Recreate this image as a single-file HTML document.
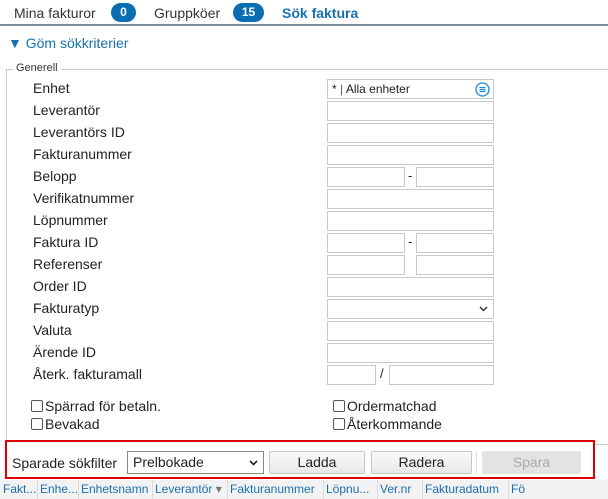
<!DOCTYPE html>
<html><head><meta charset="utf-8"><style>
*{box-sizing:border-box;margin:0;padding:0}
body{width:608px;height:499px;overflow:hidden;background:#fff;font-family:"Liberation Sans",sans-serif;color:#222;position:relative}
.a{position:absolute;white-space:nowrap}
.tab{font-size:14px;top:5px;color:#333}
.badge{background:#0a6db1;color:#fff;border-radius:10px;font-size:12px;font-weight:bold;height:19px;line-height:19px;text-align:center;top:3px}
.lbl{font-size:14px;left:33px;color:#222}
.in{position:absolute;border:1px solid #c8c8c8;height:20px;background:#fff}
.cb{position:absolute;width:12px;height:12px;border:1px solid #555;border-radius:2px;background:#fff}
.btn{position:absolute;top:451px;height:23px;border:1px solid #c8c8c8;border-radius:2px;background:linear-gradient(#fafafa,#e8e8e8);font-size:14px;text-align:center;line-height:21px;color:#222}
.hd{font-size:12px;color:#1a6fb0;top:482px}
.sep{position:absolute;top:480px;width:1px;height:19px;background:#dcdcdc}
</style></head><body>
<div class="a tab" style="left:14px">Mina fakturor</div>
<div class="a badge" style="left:111px;width:25px">0</div>
<div class="a tab" style="left:154px">Gruppköer</div>
<div class="a badge" style="left:233px;width:31px">15</div>
<div class="a tab" style="left:282px;color:#1a6fb0;font-weight:bold">Sök faktura</div>
<div class="a" style="left:0;top:24px;width:608px;height:2px;background:#7a8a99"></div>
<div class="a" style="left:8px;top:35px;font-size:14px;color:#1a6fb0">▼ Göm sökkriterier</div>
<div class="a" style="left:6px;top:69px;width:610px;height:376px;border:1px solid #c8c8c8"></div>
<div class="a" style="left:13px;top:62px;background:#fff;padding:0 3px;font-size:11px;color:#333">Generell</div>

<div class="a lbl" style="top:80px">Enhet</div>
<div class="in" style="left:327px;top:79px;width:167px;font-size:12px;line-height:18px;padding-left:4px">* <span style="color:#a04060">|</span> Alla enheter
<svg style="position:absolute;right:3px;top:2px" width="15" height="15" viewBox="0 0 15 15"><circle cx="7.5" cy="7.5" r="6.5" fill="none" stroke="#1a8ad8" stroke-width="1.3"/><path d="M4.5 5.5h6M4.5 7.5h6M4.5 9.5h6" stroke="#1a8ad8" stroke-width="1.3"/></svg></div>

<div class="a lbl" style="top:102px">Leverantör</div><div class="in" style="left:327px;top:101px;width:167px"></div>
<div class="a lbl" style="top:124px">Leverantörs ID</div><div class="in" style="left:327px;top:123px;width:167px"></div>
<div class="a lbl" style="top:146px">Fakturanummer</div><div class="in" style="left:327px;top:145px;width:167px"></div>
<div class="a lbl" style="top:168px">Belopp</div><div class="in" style="left:327px;top:167px;width:78px"></div><div class="a" style="left:408px;top:168px;font-size:13px">-</div><div class="in" style="left:416px;top:167px;width:78px"></div>
<div class="a lbl" style="top:190px">Verifikatnummer</div><div class="in" style="left:327px;top:189px;width:167px"></div>
<div class="a lbl" style="top:212px">Löpnummer</div><div class="in" style="left:327px;top:211px;width:167px"></div>
<div class="a lbl" style="top:234px">Faktura ID</div><div class="in" style="left:327px;top:233px;width:78px"></div><div class="a" style="left:408px;top:234px;font-size:13px">-</div><div class="in" style="left:416px;top:233px;width:78px"></div>
<div class="a lbl" style="top:256px">Referenser</div><div class="in" style="left:327px;top:255px;width:78px"></div><div class="in" style="left:416px;top:255px;width:78px"></div>
<div class="a lbl" style="top:278px">Order ID</div><div class="in" style="left:327px;top:277px;width:167px"></div>
<div class="a lbl" style="top:300px">Fakturatyp</div><div class="in" style="left:327px;top:299px;width:167px"><svg style="position:absolute;right:5px;top:6px" width="9" height="6"><path d="M1 1l3.5 3.5L8 1" stroke="#333" stroke-width="1.5" fill="none"/></svg></div>
<div class="a lbl" style="top:322px">Valuta</div><div class="in" style="left:327px;top:321px;width:167px"></div>
<div class="a lbl" style="top:344px">Ärende ID</div><div class="in" style="left:327px;top:343px;width:167px"></div>
<div class="a lbl" style="top:366px">Återk. fakturamall</div><div class="in" style="left:327px;top:365px;width:49px"></div><div class="a" style="left:380px;top:366px;font-size:13px">/</div><div class="in" style="left:389px;top:365px;width:105px"></div>

<div class="cb" style="left:31px;top:400px"></div><div class="a" style="left:45px;top:398px;font-size:14px">Spärrad för betaln.</div>
<div class="cb" style="left:31px;top:418px"></div><div class="a" style="left:45px;top:416px;font-size:14px">Bevakad</div>
<div class="cb" style="left:333px;top:400px"></div><div class="a" style="left:347px;top:398px;font-size:14px">Ordermatchad</div>
<div class="cb" style="left:333px;top:418px"></div><div class="a" style="left:347px;top:416px;font-size:14px">Återkommande</div>

<div class="a" style="left:5px;top:440px;width:590px;height:39px;border:2px solid #e00000;background:#fff"></div>
<div class="a" style="left:12px;top:455px;font-size:14px">Sparade sökfilter</div>
<div class="in" style="left:127px;top:451px;width:137px;height:23px;border-color:#888;font-size:14px;line-height:21px;padding-left:5px">Prelbokade<svg style="position:absolute;right:5px;top:8px" width="9" height="6"><path d="M1 1l3.5 3.5L8 1" stroke="#222" stroke-width="1.6" fill="none"/></svg></div>
<div class="btn" style="left:269px;width:96px">Ladda</div>
<div class="btn" style="left:371px;width:101px">Radera</div>
<div class="a" style="left:476px;top:452px;width:1px;height:22px;background:#ddd"></div>
<div class="btn" style="left:482px;width:99px;background:#e3e3e3;border-color:#e3e3e3;color:#aaa">Spara</div>

<div class="a" style="left:0;top:480px;width:608px;height:19px;background:#f2f2f2"></div>
<div class="sep" style="left:37px"></div><div class="sep" style="left:78px"></div><div class="sep" style="left:152px"></div><div class="sep" style="left:227px"></div><div class="sep" style="left:323px"></div><div class="sep" style="left:377px"></div><div class="sep" style="left:422px"></div><div class="sep" style="left:508px"></div>
<div class="a hd" style="left:3px">Fakt...</div>
<div class="a hd" style="left:40px">Enhe...</div>
<div class="a hd" style="left:81px">Enhetsnamn</div>
<div class="a hd" style="left:155px;color:#1a6fb0">Leverantör <span style="color:#777">▾</span></div>
<div class="a hd" style="left:230px">Fakturanummer</div>
<div class="a hd" style="left:326px">Löpnu...</div>
<div class="a hd" style="left:380px">Ver.nr</div>
<div class="a hd" style="left:425px">Fakturadatum</div>
<div class="a hd" style="left:511px">Fö</div>
</body></html>
